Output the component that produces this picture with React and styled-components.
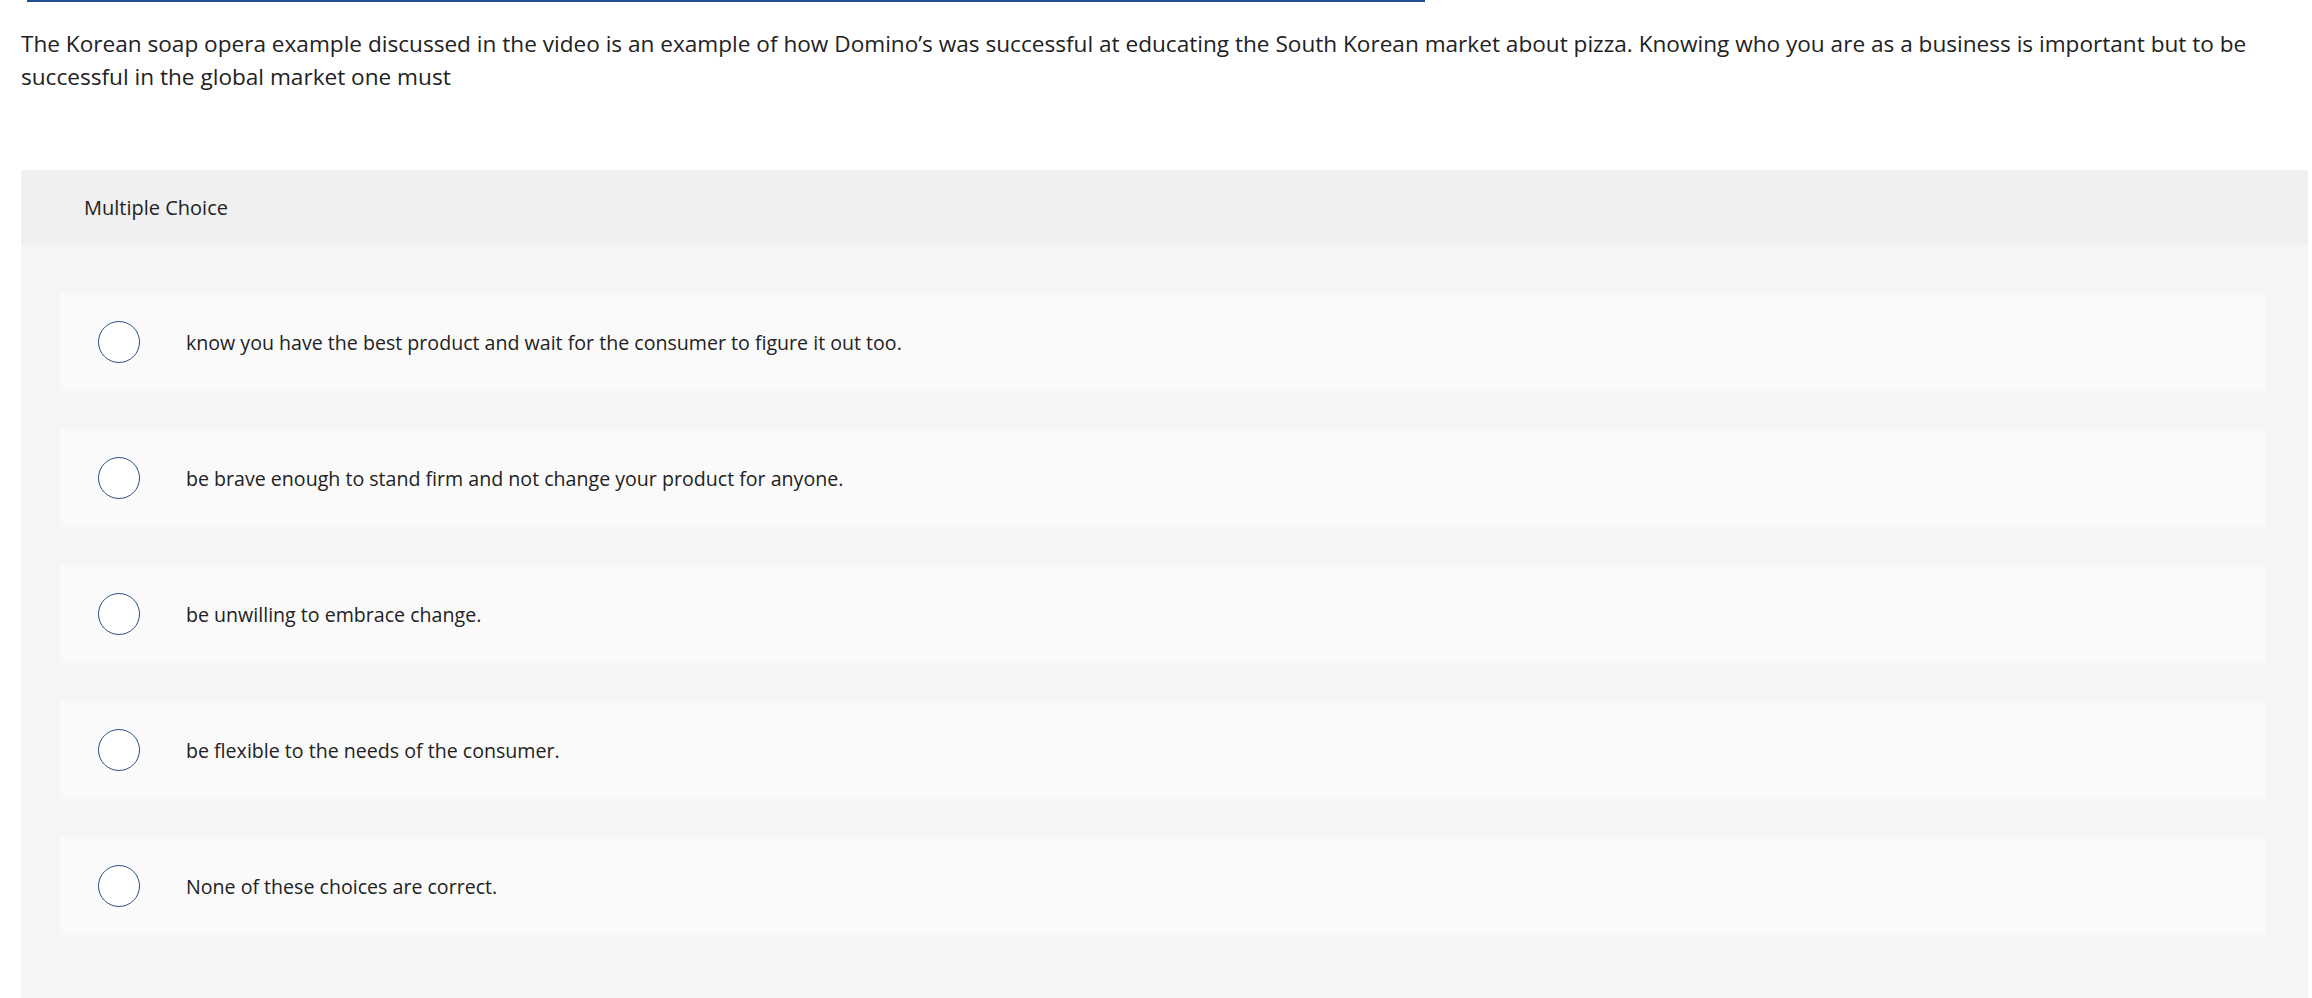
import React from "react";
import styled, { createGlobalStyle } from "styled-components";

const Global = createGlobalStyle`
  html, body { margin: 0; padding: 0; background: #ffffff; }
  body { font-family: "Open Sans", "Lato", "Liberation Sans", sans-serif; color: #222222; }
  * { box-sizing: border-box; }
`;

const Page = styled.div`
  padding: 0 4px 0 21px;
`;

const TopRule = styled.div`
  margin-left: 6px;
  width: 1398px;
  height: 2px;
  background: #1f4e8c;
`;

const Question = styled.p`
  margin: 25px 20px 0 0;
  font-size: 22.6px;
  line-height: 33px;
  color: #222222;
`;

const Panel = styled.section`
  margin-top: 77px;
  background: #f5f5f5;
  border-radius: 4px 4px 0 0;
  padding-bottom: 80px;
`;

const PanelHeader = styled.header`
  height: 75px;
  display: flex;
  align-items: center;
  padding-left: 63px;
  background: #f0f0f0;
  border-radius: 4px 4px 0 0;
  font-size: 20px;
  color: #222222;
`;

const Choices = styled.div`
  display: flex;
  flex-direction: column;
  gap: 38px;
  padding: 48px 42px 0 39px;
`;

const Choice = styled.label`
  height: 98px;
  display: flex;
  align-items: center;
  padding-left: 38px;
  background: #fafafa;
  border-radius: 4px;
  cursor: pointer;
`;

const Radio = styled.span`
  flex: none;
  width: 42px;
  height: 42px;
  border-radius: 50%;
  border: 1.5px solid #2c5286;
  background: #ffffff;
`;

const ChoiceText = styled.span`
  margin-left: 46px;
  font-size: 19.6px;
  color: #222222;
`;

const options = [
  "know you have the best product and wait for the consumer to figure it out too.",
  "be brave enough to stand firm and not change your product for anyone.",
  "be unwilling to embrace change.",
  "be flexible to the needs of the consumer.",
  "None of these choices are correct.",
];

export default function App() {
  return (
    <Page>
      <Global />
      <TopRule />
      <Question>
        The Korean soap opera example discussed in the video is an example of how Domino’s was successful at
        educating the South Korean market about pizza. Knowing who you are as a business is important but to be
        successful in the global market one must
      </Question>
      <Panel>
        <PanelHeader>Multiple Choice</PanelHeader>
        <Choices>
          {options.map((o) => (
            <Choice key={o}>
              <Radio />
              <ChoiceText>{o}</ChoiceText>
            </Choice>
          ))}
        </Choices>
      </Panel>
    </Page>
  );
}
